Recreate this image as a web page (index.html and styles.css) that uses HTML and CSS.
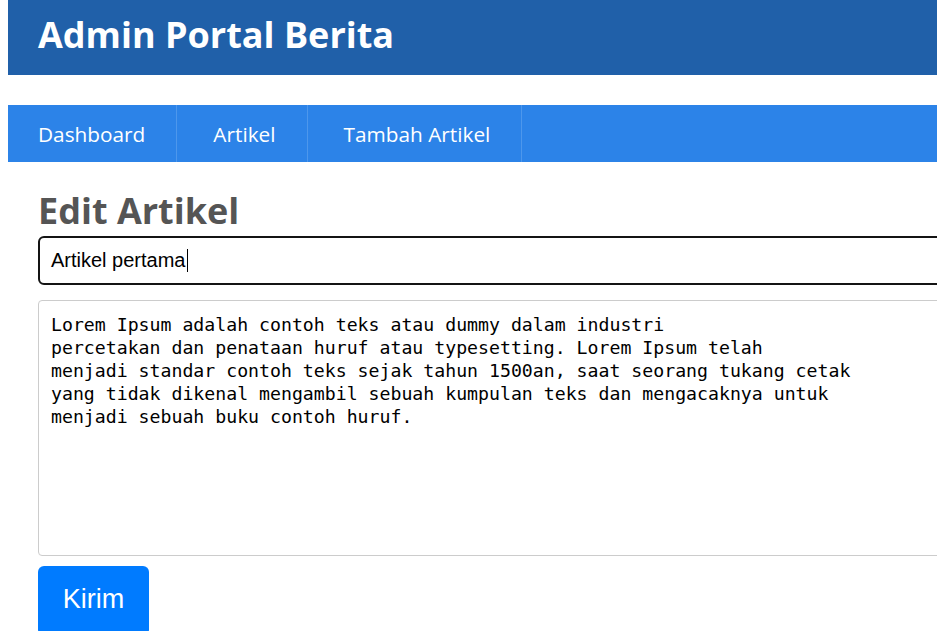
FILE: index.html
```html
<!DOCTYPE html>
<html lang="id">
<head>
<meta charset="utf-8">
<title>Admin Portal Berita</title>
<link rel="stylesheet" href="styles.css">
</head>
<body>
<div class="page">
  <header class="site-header">
    <h1 class="site-title">Admin Portal Berita</h1>
  </header>
  <nav class="main-nav">
    <a class="nav-link" href="#">Dashboard</a>
    <a class="nav-link" href="#">Artikel</a>
    <a class="nav-link" href="#">Tambah Artikel</a>
  </nav>
  <main class="content">
    <h2 class="page-title">Edit Artikel</h2>
    <form class="edit-form">
      <div class="field-input" role="textbox">Artikel pertama<span class="caret"></span></div>
      <textarea class="field-textarea">Lorem Ipsum adalah contoh teks atau dummy dalam industri
percetakan dan penataan huruf atau typesetting. Lorem Ipsum telah
menjadi standar contoh teks sejak tahun 1500an, saat seorang tukang cetak
yang tidak dikenal mengambil sebuah kumpulan teks dan mengacaknya untuk
menjadi sebuah buku contoh huruf.</textarea>
      <button class="btn-submit" type="button">Kirim</button>
    </form>
  </main>
</div>
</body>
</html>
```

FILE: styles.css
```css
html {
  overflow: hidden;
}
body {
  margin: 0 0 0 8px;
  background: #ffffff;
  font-family: "Open Sans", "Liberation Sans", sans-serif;
}
.page {
  width: 1100px;
}
.site-header {
  background: #2060a9;
  height: 75px;
  padding: 0 30px;
  display: flex;
  align-items: center;
}
.site-title {
  margin: 0;
  color: #ffffff;
  font-size: 36px;
  font-weight: 700;
  line-height: 1;
  position: relative;
  top: -3px;
}
.main-nav {
  margin-top: 30px;
  background: #2c83e8;
  height: 57px;
  display: flex;
}
.nav-link {
  display: flex;
  align-items: center;
  padding: 0 31px 0 30px;
  color: #ffffff;
  text-decoration: none;
  font-size: 20.8px;
  border-right: 1px solid #4d97ec;
}
.nav-link + .nav-link {
  padding: 0 31px 0 36px;
}
.content {
  padding: 0 30px;
}
.page-title {
  margin: 26px 0 0;
  color: #555555;
  font-size: 36px;
  font-weight: 700;
  line-height: 46px;
}
.edit-form {
  display: flex;
  flex-direction: column;
  align-items: flex-start;
}
.field-input {
  box-sizing: border-box;
  width: 100%;
  height: 49px;
  margin-top: 2px;
  border: 2px solid #141414;
  border-radius: 6px;
  padding: 0 11px;
  display: flex;
  align-items: center;
  font-family: "Liberation Sans", Arial, sans-serif;
  font-size: 20px;
  color: #000000;
}
.caret {
  display: inline-block;
  width: 1px;
  height: 23px;
  background: #000000;
  margin-left: 1px;
}
.field-textarea {
  box-sizing: border-box;
  width: 100%;
  height: 256px;
  margin: 15px 0 0;
  border: 1px solid #cccccc;
  border-radius: 4px;
  padding: 12px 12px;
  font-family: "DejaVu Sans Mono", "Liberation Mono", monospace;
  font-size: 18.2px;
  line-height: 23px;
  color: #000000;
  resize: none;
  white-space: pre;
  overflow: hidden;
}
.btn-submit {
  margin-top: 10px;
  width: 111px;
  height: 70px;
  border: none;
  border-radius: 6px;
  background: #007bff;
  color: #ffffff;
  font-family: "Liberation Sans", Arial, sans-serif;
  font-size: 27px;
  display: flex;
  align-items: flex-start;
  justify-content: center;
  padding: 18px 0 0;
}
```
